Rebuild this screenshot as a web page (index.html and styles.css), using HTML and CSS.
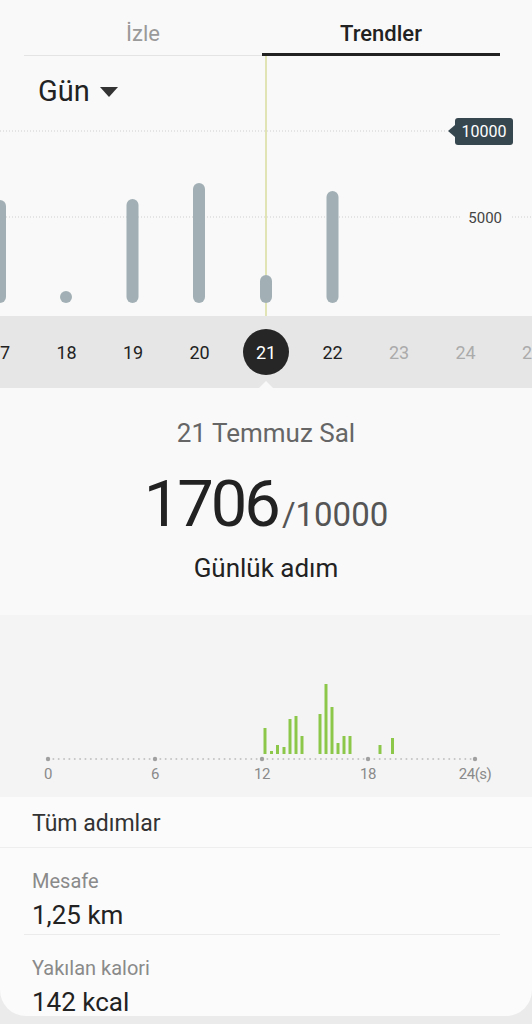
FILE: index.html
```html
<!DOCTYPE html>
<html lang="tr">
<head>
    <meta charset="UTF-8">
    <meta name="viewport" content="width=device-width, initial-scale=1.0">
    <title>Adımlar - Trendler</title>
    <link rel="stylesheet" href="styles.css">
</head>
<body>
    <div class="tabs">
        <div class="tab">İzle</div>
        <div class="tab active">Trendler</div>
    </div>

    <div class="trend-chart">
        <svg class="trend-svg" width="532" height="260" viewBox="0 0 532 260">
            <line x1="0" y1="75" x2="446" y2="75" class="grid" />
            <line x1="0" y1="161" x2="462" y2="161" class="grid" />
            <line x1="512" y1="161" x2="532" y2="161" class="grid" />
            <text x="502" y="167" class="grid-label" text-anchor="end">5000</text>

            <line x1="266" y1="0" x2="266" y2="260" class="cursor" />

            <!-- daily bars -->
            <rect x="-6" y="144" width="12" height="103" rx="6" class="bar" />
            <rect x="60" y="235" width="12" height="12" rx="6" class="bar" />
            <rect x="126.5" y="143" width="12" height="104" rx="6" class="bar" />
            <rect x="193" y="127" width="12" height="120" rx="6" class="bar" />
            <rect x="260" y="219" width="12" height="28" rx="6" class="bar" />
            <rect x="326.5" y="135" width="12" height="112" rx="6" class="bar" />
        </svg>

        <div class="period">Gün <span class="caret"></span></div>
        <div class="goal-badge">10000</div>
    </div>

    <div class="day-strip">
        <div class="days">
            <div class="day">17</div>
            <div class="day">18</div>
            <div class="day">19</div>
            <div class="day">20</div>
            <div class="day"><span class="day-selected">21</span></div>
            <div class="day">22</div>
            <div class="day future">23</div>
            <div class="day future">24</div>
            <div class="day future">25</div>
        </div>
        <div class="notch"></div>
    </div>

    <div class="summary">
        <div class="summary-date">21 Temmuz Sal</div>
        <div class="summary-count"><span class="count">1706</span><span class="goal">/10000</span></div>
        <div class="summary-label">Günlük adım</div>
    </div>

    <div class="hourly">
        <svg width="532" height="182" viewBox="0 0 532 182" id="hourlySvg">
            <g id="axisDots"></g>
            <g id="hourBars"></g>
            <text x="48" y="164" class="axis-label">0</text>
            <text x="155" y="164" class="axis-label">6</text>
            <text x="262" y="164" class="axis-label">12</text>
            <text x="368" y="164" class="axis-label">18</text>
            <text x="475" y="164" class="axis-label">24(s)</text>
        </svg>
    </div>

    <div class="details">
        <div class="detail-row title-row">Tüm adımlar</div>
        <div class="detail-row">
            <div class="detail-label">Mesafe</div>
            <div class="detail-value">1,25 km</div>
        </div>
        <div class="detail-row last">
            <div class="detail-label">Yakılan kalori</div>
            <div class="detail-value">142 kcal</div>
        </div>
    </div>

    <script>
        // hourly bars: [x position, top y]
        const hourData = [
            [265, 113], [271.5, 136], [277.5, 130], [284, 132], [290, 104],
            [296, 101], [302, 121], [320, 99], [326, 69], [332, 92],
            [338, 128], [344, 121], [350, 121], [380, 130], [392.5, 123]
        ];
        const ns = 'http://www.w3.org/2000/svg';

        const dots = document.getElementById('axisDots');
        for (let x = 48; x <= 476; x += 5.35) {
            const c = document.createElementNS(ns, 'circle');
            c.setAttribute('cx', x);
            c.setAttribute('cy', 144);
            c.setAttribute('r', 1);
            c.setAttribute('class', 'axis-dot');
            dots.appendChild(c);
        }
        [48, 155, 262, 368, 475].forEach(x => {
            const c = document.createElementNS(ns, 'circle');
            c.setAttribute('cx', x);
            c.setAttribute('cy', 144);
            c.setAttribute('r', 2.2);
            c.setAttribute('class', 'axis-tick');
            dots.appendChild(c);
        });

        const bars = document.getElementById('hourBars');
        hourData.forEach(([x, top]) => {
            const r = document.createElementNS(ns, 'rect');
            r.setAttribute('x', x - 1.5);
            r.setAttribute('y', top);
            r.setAttribute('width', 3);
            r.setAttribute('height', 139 - top);
            r.setAttribute('class', 'hour-bar');
            bars.appendChild(r);
        });
    </script>
</body>
</html>
```

FILE: styles.css
```css
body {
    font-family: Roboto, "Noto Sans", Arial, sans-serif;
    background-color: #ebebeb;
    margin: 0;
    width: 532px;
    height: 1024px;
    overflow: hidden;
    color: #222;
}

.tabs {
    display: flex;
    height: 56px;
    padding: 0 32px 0 24px;
    background-color: #f9f9f9;
}

.tab {
    flex: 1;
    display: flex;
    align-items: center;
    justify-content: center;
    padding-top: 12px;
    font-size: 22px;
    color: #9a9a9a;
    border-bottom: 1px solid #e4e4e4;
    box-sizing: border-box;
}

.tab.active {
    color: #222;
    font-weight: 500;
    border-bottom: 3px solid #222;
    padding-top: 14px;
}

.trend-chart {
    position: relative;
    height: 260px;
    background-color: #f9f9f9;
    overflow: hidden;
}

.trend-svg {
    display: block;
}

.grid {
    stroke: #cfcfcf;
    stroke-width: 1;
    stroke-dasharray: 1 2;
}

.grid-label {
    font-size: 15px;
    fill: #444;
    font-family: Roboto, Arial, sans-serif;
}

.cursor {
    stroke: #d8dc9c;
    stroke-width: 1.5;
}

.bar {
    fill: #a2b0b5;
}

.period {
    position: absolute;
    left: 38px;
    top: 18px;
    font-size: 29px;
    color: #222;
    display: flex;
    align-items: center;
    gap: 10px;
}

.caret {
    width: 0;
    height: 0;
    border-left: 9px solid transparent;
    border-right: 9px solid transparent;
    border-top: 10px solid #333;
    margin-top: 2px;
}

.goal-badge {
    position: absolute;
    left: 455px;
    top: 62px;
    width: 58px;
    height: 27px;
    line-height: 27px;
    text-align: center;
    background-color: #37474f;
    color: #fff;
    font-size: 16px;
    border-radius: 3px;
}

.goal-badge::before {
    content: "";
    position: absolute;
    left: -7px;
    top: 7px;
    border-top: 6px solid transparent;
    border-bottom: 6px solid transparent;
    border-right: 7px solid #37474f;
}

.day-strip {
    position: relative;
    height: 72px;
    background-color: #e6e6e6;
    overflow: hidden;
}

.days {
    display: flex;
    margin-left: -33.25px;
    height: 100%;
}

.day {
    flex: 0 0 66.5px;
    display: flex;
    align-items: center;
    justify-content: center;
    font-size: 18px;
    color: #222;
}

.day.future {
    color: #ababab;
}

.day-selected {
    width: 46px;
    height: 46px;
    border-radius: 50%;
    background-color: #262626;
    color: #fff;
    display: flex;
    align-items: center;
    justify-content: center;
}

.notch {
    position: absolute;
    left: 259px;
    bottom: 0;
    border-left: 7px solid transparent;
    border-right: 7px solid transparent;
    border-bottom: 7px solid #f9f9f9;
}

.summary {
    height: 227px;
    background-color: #f9f9f9;
    display: flex;
    flex-direction: column;
    align-items: center;
    box-sizing: border-box;
    padding-top: 28px;
}

.summary-date {
    font-size: 26px;
    color: #666;
    line-height: 34px;
}

.summary-count {
    margin-top: 19px;
    line-height: 70px;
}

.count {
    font-size: 65px;
    letter-spacing: -3px;
    color: #222;
}

.goal {
    font-size: 33px;
    color: #555;
    margin-left: 4px;
}

.summary-label {
    margin-top: -5px;
    font-size: 26px;
    line-height: 34px;
    color: #222;
}

.hourly {
    height: 182px;
    background-color: #f4f4f4;
}

.hourly svg {
    display: block;
}

.axis-dot {
    fill: #c4c4c4;
}

.axis-tick {
    fill: #a0a0a0;
}

.axis-label {
    font-family: Roboto, Arial, sans-serif;
    font-size: 15px;
    letter-spacing: -0.5px;
    fill: #8a8a8a;
    text-anchor: middle;
}

.hour-bar {
    fill: #8cc74a;
}

.details {
    background-color: #fbfbfb;
    border-radius: 0 0 26px 26px;
    height: 219px;
    overflow: hidden;
}

.detail-row {
    margin: 0 32px 0 24px;
    padding: 17px 0 0 8px;
    border-bottom: 1px solid #ebebeb;
    height: 87px;
    box-sizing: border-box;
}

.detail-row.title-row {
    height: 51px;
    margin: 0;
    padding: 12px 0 0 32px;
    font-size: 23px;
    line-height: 30px;
    color: #333;
    border-bottom: 1px solid #eeeeee;
}

.detail-row.last {
    border-bottom: none;
}

.detail-label {
    font-size: 20px;
    color: #8a8a8a;
    line-height: 32px;
}

.detail-value {
    font-size: 26px;
    color: #222;
    line-height: 36px;
}
```
